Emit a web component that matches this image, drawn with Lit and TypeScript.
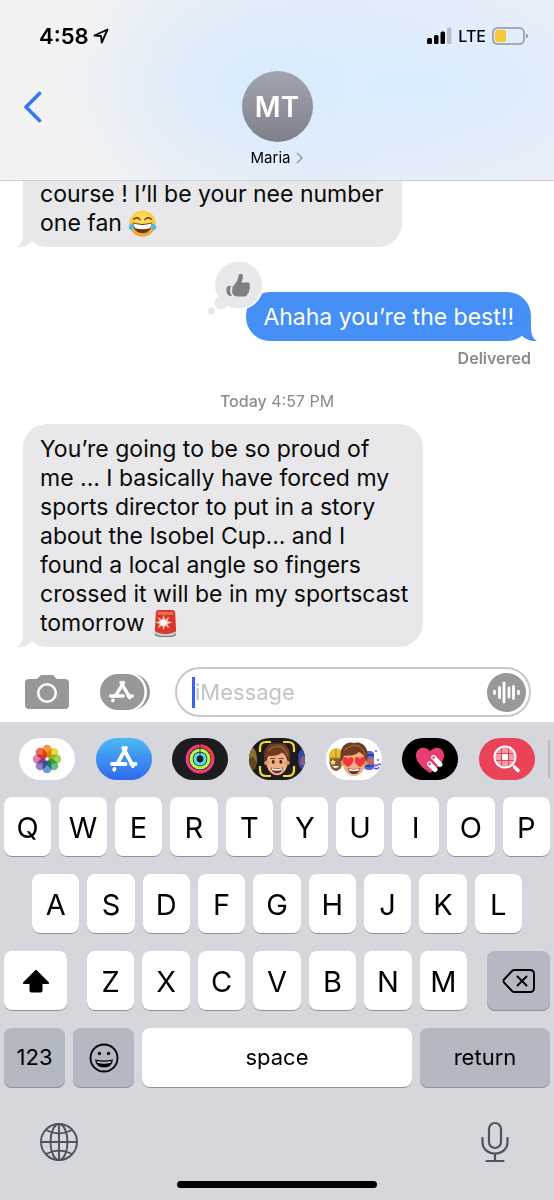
import { LitElement, html, css, svg } from "lit";
import { customElement, property } from "lit/decorators.js";

/* ---------- shared glyphs ---------- */

const storeGlyph = svg`
  <g fill="none" stroke="#fff" stroke-width="4" stroke-linecap="round">
    <path d="M15.500 3 L26 21" />
    <path d="M18.500 3 L9.500 18" />
    <path d="M3 19 H18" />
    <path d="M24 19 H29" />
    <path d="M6 24 L5.600 24.600" />
  </g>`;

const joyEmoji = html`<svg class="emoji" viewBox="0 0 30 30" role="img" aria-label="Face with tears of joy">
  <defs>
    <radialGradient id="joy" cx="50%" cy="35%" r="65%">
      <stop offset="0" stop-color="#ffe566" />
      <stop offset="0.7" stop-color="#fbc737" />
      <stop offset="1" stop-color="#e8932a" />
    </radialGradient>
  </defs>
  <circle cx="15" cy="15" r="13.500" fill="url(#joy)" />
  <path d="M5 14 Q15 17 25 14 Q25 25 15 25 Q5 25 5 14Z" fill="#6b3410" />
  <path d="M6 15 Q15 18 24 15 Q24 19 22.500 20 Q15 22 7.500 20 Q6 18 6 15Z" fill="#fff" />
  <path d="M6 10.500 Q9.500 7.500 12.500 11 M17.500 11 Q20.500 7.500 24 10.500" fill="none" stroke="#6b3410" stroke-width="1.500" stroke-linecap="round" />
  <path d="M6 14.500 Q7 21 3.500 21.500 Q0 21.500 1 18 Q2 15.500 6 14.500Z M24 14.500 Q23 21 26.500 21.500 Q30 21.500 29 18 Q28 15.500 24 14.500Z" fill="#4eb5ee" />
</svg>`;

const sirenEmoji = html`<svg class="emoji" viewBox="0 0 30 30" role="img" aria-label="Police car light">
  <path d="M5 22 H25 L26 26 Q26 29 15 29 Q4 29 4 26Z" fill="#70777c" />
  <path d="M5 22 H25 L26 25 Q24 28 15 28 Q6 28 4 25Z" fill="#c3cbd0" />
  <path d="M5 4 Q5 1 8 1 H22 Q25 1 25 4 L26 23 Q21 26 15 26 Q9 26 4 23Z" fill="#d8372b" />
  <path d="M7 3 H23 L23 6 H7Z" fill="#f0705c" />
  <path d="M13 6 L14.500 11 L19 8 L17 12.500 L22 14 L17 15.500 L19 20 L14.500 17 L13 22 L11.500 17 L7 20 L9 15.500 L4.500 14 L9 12.500 L7 8 L11.500 11Z" fill="#ffc9bd" />
  <circle cx="13" cy="14" r="3" fill="#fff" />
</svg>`;

const memojiHead = svg`
  <ellipse cx="0" cy="3" rx="11" ry="13" fill="#eeb083" />
  <circle cx="-11" cy="3" r="2.500" fill="#dc9668" />
  <circle cx="11" cy="3" r="2.500" fill="#dc9668" />
  <path d="M-13 1 C-16 -16 -5 -19 0 -17 C9 -20 17 -10 12.500 2 C11 -3 9 -6 5 -8 C0 -3 -8 -5 -10 -4 Q-11 0 -13 1Z" fill="#6d3b22" />
  <path d="M-9 -10 Q-3 -16 5 -14 M6 -13 Q10 -10 11 -5" fill="none" stroke="#9a5c38" stroke-width="1.500" stroke-linecap="round" />
  <path d="M-6.500 8 Q0 10 6.500 8 Q5 14 0 14 Q-5 14 -6.500 8Z" fill="#6d2a22" />
  <path d="M-5.500 8.500 Q0 10.500 5.500 8.500 L5 10.500 Q0 12 -5 10.500Z" fill="#fff" />`;

/* ---------- message bubble ---------- */

@customElement("message-bubble")
class MessageBubble extends LitElement {
  @property({ reflect: true }) side = "left";
  @property({ type: Boolean, reflect: true }) continued = false;

  static styles = css`
    :host {
      display: block;
      position: relative;
      flex: none;
      align-self: flex-start;
      box-sizing: border-box;
      max-width: 400px;
      padding: 11px 11px 9px 17px;
      border-radius: 24px;
      background: #e8e8ea;
      color: #0a0a0a;
      font-size: 23px;
      line-height: 29px;
    }
    :host([continued]) {
      max-width: 379px;
      border-top-left-radius: 0;
      border-top-right-radius: 0;
    }
    :host([side="right"]) {
      align-self: flex-end;
      padding-right: 17px;
      background: #468ff6;
      color: #fff;
    }
    .tail {
      position: absolute;
      bottom: 0;
      left: -6px;
      width: 17px;
      height: 22px;
      fill: #e8e8ea;
    }
    :host([side="right"]) .tail {
      left: auto;
      right: -6px;
      fill: #468ff6;
      transform: scaleX(-1);
    }
  `;

  render() {
    return html`<slot></slot>
      <svg class="tail" viewBox="0 0 17 22" aria-hidden="true">
        <path d="M6 0 V6 C6 15 5 19 0 22 C6 22.500 12 20 15.500 16.500 L17 0Z" />
      </svg>`;
  }
}

/* ---------- keyboard ---------- */

@customElement("touch-keyboard")
class TouchKeyboard extends LitElement {
  static styles = css`
    :host {
      display: block;
      padding: 16px 0 12px;
      background: #d5d7dd;
      color: #000;
    }
    button {
      padding: 0;
      border: 0;
      background: none;
      color: inherit;
      font: inherit;
    }
    svg {
      display: block;
    }
    .apps {
      display: flex;
      align-items: center;
      gap: 13px;
      padding: 0 4px 0 19px;
      margin-bottom: 17px;
    }
    .pills {
      flex: 1;
      display: flex;
      justify-content: space-between;
    }
    .pill {
      width: 56px;
      height: 42px;
      border-radius: 21px;
      overflow: hidden;
      background: #fff;
    }
    .pill.store {
      background: linear-gradient(#4cb9f4, #2f69ee);
    }
    .pill.dark {
      background: #1c1c1e;
    }
    .pill.black {
      background: #000;
    }
    .pill.red {
      background: #ea4359;
    }
    .petal {
      mix-blend-mode: multiply;
    }
    .divider {
      width: 2px;
      height: 38px;
      background: #bbbdc3;
    }
    .rows {
      display: flex;
      flex-direction: column;
      gap: 17px;
    }
    .row {
      display: flex;
      gap: 8px;
      padding: 0 4px;
    }
    .row.middle {
      padding: 0 32px;
    }
    .row.lower {
      gap: 20px;
    }
    .letters {
      flex: 1;
      display: flex;
      gap: 8px;
    }
    .key {
      flex: 1 1 0;
      min-width: 0;
      height: 60px;
      display: flex;
      align-items: center;
      justify-content: center;
      border-radius: 8px;
      background: #fff;
      box-shadow: inset 0 -1px 0 #8f9196;
      font-size: 29px;
    }
    .key.side {
      flex: 0 0 63px;
    }
    .key.small {
      flex: 0 0 61px;
    }
    .key.return {
      flex: 0 0 130px;
    }
    .key.gray {
      background: #b3b8c2;
    }
    .key.word {
      font-size: 22px;
      padding-bottom: 2px;
    }
    .tools {
      display: flex;
      justify-content: space-between;
      align-items: center;
      height: 42px;
      margin: 33px 39px 18px;
      color: #505359;
    }
    .home {
      width: 36%;
      height: 7px;
      margin: 0 auto;
      border-radius: 4px;
      background: #000;
    }
  `;

  private letters(keys: string) {
    return [...keys].map((k) => html`<button class="key">${k}</button>`);
  }

  private photos() {
    const petals = ["#f59a35", "#e6dc4a", "#a3d25c", "#5fbf8c", "#6a9ad6", "#9482c2", "#dd7fab", "#ee6a52"];
    return html`<svg width="56" height="42" viewBox="0 0 56 42">
      ${petals.map(
        (c, i) => svg`<rect class="petal" x="23.500" y="6.800" width="9" height="12.800" rx="4.500" fill=${c} transform="rotate(${i * 45} 28 21)" />`
      )}
    </svg>`;
  }

  render() {
    return html`
      <div class="apps">
        <div class="pills">
          <button class="pill" aria-label="Photos">${this.photos()}</button>
          <button class="pill store" aria-label="App Store">
            <svg width="56" height="42" viewBox="0 0 56 42">
              <g transform="translate(13 7) scale(0.920 1)">${storeGlyph}</g>
            </svg>
          </button>
          <button class="pill dark" aria-label="Activity">
            <svg width="56" height="42" viewBox="0 0 56 42" fill="none">
              <circle cx="28" cy="21" r="12.800" stroke="#ee3e7c" stroke-width="3.200" />
              <path d="M28 8.200 A12.800 12.800 0 0 1 40.800 21" stroke="#f03b46" stroke-width="3.200" />
              <circle cx="28" cy="21" r="8.900" stroke="#b9f452" stroke-width="3.200" />
              <circle cx="28" cy="21" r="5" stroke="#58dcec" stroke-width="3.200" />
              <path d="M28 6.500 V18" stroke="#1c1c1e" stroke-width="0.800" />
            </svg>
          </button>
          <button class="pill dark" aria-label="Memoji">
            <svg width="56" height="42" viewBox="0 0 56 42">
              <ellipse cx="2" cy="21" rx="6" ry="12" fill="#8b7132" />
              <ellipse cx="3" cy="26" rx="4" ry="7" fill="#594719" />
              <ellipse cx="55" cy="21" rx="6" ry="11" fill="#364aa6" />
              <ellipse cx="55" cy="23" rx="4" ry="5" fill="#865c87" />
              <g transform="translate(28 22) scale(0.950)">
                ${memojiHead}
                <ellipse cx="-4" cy="2" rx="1.500" ry="2" fill="#352015" />
                <ellipse cx="4" cy="2" rx="1.500" ry="2" fill="#352015" />
                <path d="M-7 -1.500 H-2 M2 -1.500 H7" stroke="#6d3b22" />
              </g>
              <path d="M11 14 V10 Q11 4 17 4 H22 M34 4 H39 Q45 4 45 10 V14 M45 28 V32 Q45 38 39 38 H34 M22 38 H17 Q11 38 11 32 V28" fill="none" stroke="#f8d936" stroke-width="2.200" />
            </svg>
          </button>
          <button class="pill" aria-label="Memoji stickers">
            <svg width="56" height="42" viewBox="0 0 56 42">
              <ellipse cx="10" cy="24" rx="6.500" ry="9" fill="#805a35" />
              <path d="M3 20 Q3 10 10 10 Q17 10 17 20Z" fill="#e8bd35" />
              <path d="M3 20 H17 M10 11 V20" stroke="#b48924" />
              <path d="M7 21 l1 2 l2 .5 l-1.500 1.500 l.5 2 l-2 -1 l-2 1 l.5 -2 l-1.500 -1.500 l2 -.5z" fill="#ffe05b" />
              <path d="M6 28 Q10 32 13 28Z" fill="#fff" />
              <rect x="38" y="13" width="10" height="19" rx="4" fill="#5369d2" />
              <path d="M38 17 H48 M38 28 H48" stroke="#31419b" stroke-width="2" />
              <rect x="39" y="20" width="9" height="6" fill="#b96e67" />
              <path d="M44 28 Q48 25 50 28 Q54 25 55 27 M48 30 Q52 32 53 29" fill="none" stroke="#7454de" stroke-width="1.500" />
              <circle cx="50" cy="13" r="1" fill="#7454de" /><circle cx="52" cy="22" r="1" fill="#7454de" />
              <g transform="translate(28 22)">
                ${memojiHead}
                <path d="M-6 7 C-13 3 -12 -3 -8.500 -3 Q-6.500 -3 -6 -1 Q-5 -3 -3 -3 C0 -3 1 3 -6 7Z M6 7 C13 3 12 -3 8.500 -3 Q6.500 -3 6 -1 Q5 -3 3 -3 C0 -3 -1 3 6 7Z" fill="#f5333b" />
              </g>
            </svg>
          </button>
          <button class="pill black" aria-label="Digital Touch">
            <svg width="56" height="42" viewBox="0 0 56 42">
              <path d="M28 35 C22 31 14 25 14 17.500 C14 9 24 7.500 28 13.500 C32 7.500 42 9 42 17.500 C42 25 34 31 28 35Z" fill="#e73e70" />
              <g stroke="#fff" stroke-width="5" stroke-linecap="round">
                <path d="M27.500 26 L33 31.500" /><path d="M31.500 19.500 L38 26.500" />
              </g>
              <circle cx="27.500" cy="26" r="1.300" fill="#e73e70" /><circle cx="31.500" cy="19.500" r="1.300" fill="#e73e70" />
              <path d="M29 21 L36 29" stroke="#e73e70" stroke-width="1.200" />
            </svg>
          </button>
          <button class="pill red" aria-label="Image search">
            <svg width="56" height="42" viewBox="0 0 56 42" fill="none" stroke="#fff">
              <circle cx="26" cy="19" r="9.500" fill="#f3a0aa" stroke="none" />
              <rect x="23" y="16" width="6" height="6" fill="#fff" stroke="none" />
              <path d="M22.500 10 V28 M29.500 10 V28 M17 15.500 H35 M17 22.500 H35" stroke="#ea4359" stroke-width="1.200" />
              <circle cx="26" cy="19" r="10.500" stroke-width="2" />
              <path d="M34 27.500 L36 29.500" stroke-width="2" />
              <path d="M36 29.500 L39 32.500" stroke-width="3.600" stroke-linecap="round" />
            </svg>
          </button>
        </div>
        <div class="divider"></div>
      </div>

      <div class="rows">
        <div class="row">${this.letters("QWERTYUIOP")}</div>
        <div class="row middle">${this.letters("ASDFGHJKL")}</div>
        <div class="row lower">
          <button class="key side" aria-label="Shift">
            <svg width="28" height="24" viewBox="0 0 28 24">
              <path d="M14 0.500 L27 13.500 Q27.500 15 26 15 H20.500 V21.500 Q20.500 23.500 18.500 23.500 H9.500 Q7.500 23.500 7.500 21.500 V15 H2 Q.500 15 1 13.500Z" />
            </svg>
          </button>
          <div class="letters">${this.letters("ZXCVBNM")}</div>
          <button class="key side gray" aria-label="Delete">
            <svg width="34" height="26" viewBox="0 0 34 26" fill="none" stroke="#000" stroke-width="1.900" stroke-linecap="round" stroke-linejoin="round">
              <path d="M12.500 2 H28 Q32 2 32 6 V20 Q32 24 28 24 H12.500 Q11 24 10 23 L2 14.500 Q1 13 2 11.500 L10 3 Q11 2 12.500 2Z" />
              <path d="M15.500 8.500 L24.500 17.500 M24.500 8.500 L15.500 17.500" />
            </svg>
          </button>
        </div>
        <div class="row">
          <button class="key small gray word">123</button>
          <button class="key small gray" aria-label="Emoji">
            <svg width="30" height="30" viewBox="0 0 30 30">
              <circle cx="15" cy="15" r="13.500" fill="none" stroke="#000" stroke-width="1.800" />
              <circle cx="10.500" cy="10.500" r="1.700" /><circle cx="19.500" cy="10.500" r="1.700" />
              <path d="M6 16.500 Q15 18.500 24 16.500 Q23 24.500 15 24.500 Q7 24.500 6 16.500Z" />
              <path d="M7.500 18 Q15 19.500 22.500 18 L21.500 20 Q15 21.500 8.500 20Z" fill="#b3b8c2" />
            </svg>
          </button>
          <button class="key word">space</button>
          <button class="key return gray word">return</button>
        </div>
      </div>

      <div class="tools">
        <button aria-label="Next keyboard">
          <svg width="40" height="40" viewBox="0 0 40 40" fill="none" stroke="currentColor" stroke-width="1.900">
            <circle cx="20" cy="20" r="18" />
            <ellipse cx="20" cy="20" rx="8.500" ry="18" />
            <path d="M20 2 V38 M2 20 H38 M7 8 Q20 15 33 8 M7 32 Q20 25 33 32" />
          </svg>
        </button>
        <button aria-label="Dictate">
          <svg width="40" height="42" viewBox="0 0 40 42" fill="none" stroke="currentColor" stroke-width="2.200" stroke-linecap="round">
            <rect x="14" y="2" width="12" height="25" rx="6" />
            <path d="M7.500 17 V21 C7.500 28 13 32.500 20 32.500 S32.500 28 32.500 21 V17 M20 33 V40 M11.500 40 H28.500" />
          </svg>
        </button>
      </div>
      <div class="home"></div>
    `;
  }
}

/* ---------- app ---------- */

@customElement("app-root")
class AppRoot extends LitElement {
  static styles = css`
    :host {
      display: flex;
      flex-direction: column;
      height: 100vh;
      background: #fff;
      color: #000;
      font-family: Inter, "Liberation Sans", sans-serif;
    }
    button {
      padding: 0;
      border: 0;
      background: none;
      color: inherit;
      font: inherit;
    }
    svg {
      display: block;
    }
    header {
      flex: none;
      border-bottom: 1px solid #ccd0d6;
      background:
        radial-gradient(ellipse 46% 60% at 76% 47%, #d8ecff 0%, #d8ecff00 100%),
        radial-gradient(ellipse 34% 74% at 46% 47%, #d8ebfd 0%, #d8ebfd00 100%),
        linear-gradient(90deg, #f3f3f3 0%, #f1f2f4 20%, #e7edf7 60%, #ebeff8 100%);
    }
    .status {
      display: flex;
      align-items: center;
      justify-content: space-between;
      height: 71px;
      padding: 0 26px 0 39px;
    }
    .clock {
      display: flex;
      align-items: center;
      gap: 4px;
      font-size: 22px;
      font-weight: 600;
    }
    .signals {
      display: flex;
      align-items: center;
      gap: 6px;
    }
    .carrier {
      font-size: 16px;
      font-weight: 500;
    }
    .nav {
      display: grid;
      grid-template-columns: 1fr auto 1fr;
      align-items: start;
    }
    .back {
      justify-self: start;
      height: 71px;
      padding: 0 23px;
    }
    .contact {
      display: flex;
      flex-direction: column;
      align-items: center;
      gap: 4px;
      padding-bottom: 10px;
    }
    .avatar {
      display: flex;
      align-items: center;
      justify-content: center;
      width: 71px;
      height: 71px;
      border-radius: 50%;
      background: linear-gradient(#a2a4b0, #7f808c);
      color: #fff;
      font-size: 28px;
      font-weight: 600;
    }
    .name {
      display: flex;
      align-items: center;
      gap: 6px;
      font-size: 15px;
      line-height: 24px;
    }
    .thread {
      flex: 1;
      min-height: 0;
      overflow: hidden;
      display: flex;
      flex-direction: column;
      justify-content: flex-end;
      padding: 0 23px;
    }
    .emoji {
      display: inline-block;
      width: 29px;
      height: 29px;
      vertical-align: -7px;
    }
    .reply {
      margin-top: 45px;
    }
    .reaction {
      position: absolute;
      left: -39px;
      top: -32px;
    }
    .receipt {
      margin: 7px 0 23px;
      text-align: right;
      font-weight: 600;
    }
    .receipt,
    .stamp {
      flex: none;
      color: #8a8a8e;
      font-size: 16px;
      line-height: 20px;
    }
    .stamp {
      margin-bottom: 13px;
      text-align: center;
    }
    .stamp b {
      font-weight: 500;
    }
    .compose {
      flex: none;
      display: flex;
      align-items: center;
      padding: 20px 23px 5px 25px;
    }
    .camera {
      margin-right: 31px;
    }
    .drawer {
      margin-right: 25px;
    }
    .field {
      flex: 1;
      min-width: 0;
      box-sizing: border-box;
      height: 50px;
      display: flex;
      align-items: center;
      padding: 0 3px 0 15px;
      border: 2px solid #c8c8cb;
      border-radius: 25px;
    }
    .caret {
      width: 3px;
      height: 31px;
      background: #3d62f0;
    }
    .field input {
      flex: 1;
      min-width: 0;
      padding: 0;
      border: 0;
      outline: 0;
      background: none;
      font: inherit;
      font-size: 22px;
    }
    .field input::placeholder {
      color: #c3c3c7;
      opacity: 1;
    }
  `;

  render() {
    return html`
      <header>
        <div class="status">
          <div class="clock">
            <span>4:58</span>
            <svg width="16" height="16" viewBox="0 0 16 16" fill="none" stroke="#000" stroke-width="1.900" stroke-linejoin="round" aria-hidden="true">
              <path d="M14.500 1.500 L1.500 7.500 L8 8 L8.800 14.500Z" />
            </svg>
          </div>
          <div class="signals">
            <svg width="25" height="17" viewBox="0 0 25 17" aria-hidden="true">
              <rect x="0" y="11" width="5" height="6" rx="1.500" />
              <rect x="7" y="8" width="4.500" height="9" rx="1.500" />
              <rect x="13.500" y="4.500" width="4.500" height="12.500" rx="1.500" />
              <rect x="20" y="0.500" width="4.500" height="16.500" rx="1.500" fill="#b4c0cd" />
            </svg>
            <span class="carrier">LTE</span>
            <svg width="36" height="18" viewBox="0 0 36 18" aria-hidden="true">
              <rect x="1" y="1" width="31" height="16" rx="4.500" fill="none" stroke="#8b95a0" stroke-width="1.500" />
              <rect x="3" y="3" width="11" height="12" rx="2" fill="#f6c93c" />
              <path d="M34 6.500 Q36 7.500 36 9 Q36 10.500 34 11.500Z" fill="#8b95a0" />
            </svg>
          </div>
        </div>
        <div class="nav">
          <button class="back" aria-label="Back">
            <svg width="20" height="32" viewBox="0 0 20 32" fill="none" stroke="#3478f0" stroke-width="3.600" stroke-linecap="round" stroke-linejoin="round">
              <path d="M16.500 2.500 L3 16 L16.500 29.500" />
            </svg>
          </button>
          <button class="contact">
            <span class="avatar">MT</span>
            <span class="name">
              Maria
              <svg width="7" height="12" viewBox="0 0 7 12" fill="none" stroke="#8a929c" stroke-width="1.300" aria-hidden="true">
                <path d="M1 1 L6 6 L1 11" />
              </svg>
            </span>
          </button>
        </div>
      </header>

      <main class="thread">
        <message-bubble continued>course ! I’ll be your nee number one fan ${joyEmoji}</message-bubble>
        <message-bubble class="reply" side="right">
          Ahaha you’re the best!!
          <svg class="reaction" width="56" height="60" viewBox="0 0 56 60" role="img" aria-label="Liked">
            <circle cx="31.500" cy="25" r="25" fill="#fff" />
            <circle cx="31.500" cy="25" r="23.500" fill="#e8e8ea" />
            <circle cx="14" cy="43" r="6.500" fill="#e8e8ea" />
            <circle cx="4.500" cy="51" r="3.500" fill="#e8e8ea" />
            <path d="M25.500 27 C28 24 31 21 31.500 16 C31.700 13.500 35.500 12.500 36 16 C36.200 18.500 35 20.500 34.500 22.500 H40.500 C43 22.500 43.500 25 42.300 26 C43.500 27.500 43 29.500 41.800 30 C42.500 31.500 41.800 33 40.500 33.500 C40.500 35.500 39 36.500 37 36.500 H31 C28 36.500 25.500 35 25 32Z" fill="#7f7f83" />
            <path d="M24 26 C20 25 19 28 19.500 31 C20 35 22 36.500 25 36 C22.500 33 22.500 29 24 26Z" fill="#7f7f83" />
          </svg>
        </message-bubble>
        <div class="receipt">Delivered</div>
        <div class="stamp"><b>Today</b> 4:57 PM</div>
        <message-bubble>You’re going to be so proud of me&nbsp;... I basically have forced my sports director to put in a story about the Isobel Cup... and I found a local angle so fingers crossed it will be in my sportscast tomorrow ${sirenEmoji}</message-bubble>
      </main>

      <div class="compose">
        <button class="camera" aria-label="Camera">
          <svg width="44" height="34" viewBox="0 0 44 34">
            <path d="M4 4 H11 Q13 4 14 2 Q15 0 17 0 H27 Q29 0 30 2 Q31 4 33 4 H40 Q44 4 44 8 V30 Q44 34 40 34 H4 Q0 34 0 30 V8 Q0 4 4 4Z" fill="#98989a" />
            <circle cx="22" cy="18" r="8.800" fill="none" stroke="#fff" stroke-width="2.500" />
          </svg>
        </button>
        <button class="drawer" aria-label="Apps">
          <svg width="50" height="36" viewBox="0 0 50 36">
            <rect x="6" y="0" width="44" height="36" rx="18" fill="#98989a" />
            <rect x="-2" y="-2" width="49" height="40" rx="20" fill="#fff" />
            <rect x="0" y="0" width="44.500" height="36" rx="18" fill="#98989a" />
            <g transform="translate(8 6) scale(0.840 0.840)">${storeGlyph}</g>
          </svg>
        </button>
        <div class="field">
          <span class="caret"></span>
          <input type="text" aria-label="Message" placeholder="iMessage" />
          <button aria-label="Record audio">
            <svg width="39" height="39" viewBox="0 0 39 39">
              <circle cx="19.500" cy="19.500" r="19.500" fill="#98989a" />
              <path d="M7.500 18.500 V20.500 M12.500 14.500 V24.500 M17 10 V29 M22 15 V24 M26.500 13.500 V25.500 M31.500 18.500 V20.500" fill="none" stroke="#fff" stroke-width="2.800" stroke-linecap="round" />
            </svg>
          </button>
        </div>
      </div>

      <touch-keyboard></touch-keyboard>
    `;
  }
}
